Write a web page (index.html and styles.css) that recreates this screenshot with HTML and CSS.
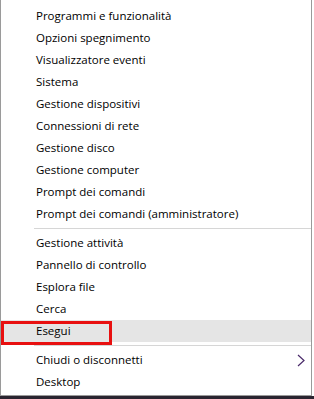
FILE: index.html
```html
<!DOCTYPE html>
<html>
<head>
    <title>Menu</title>
    <meta charset="utf-8">
    <link rel="stylesheet" href="styles.css">
</head>
<body>
    <div class="menu">
        <ul class="group">
            <li class="item">Programmi e funzionalità</li>
            <li class="item">Opzioni spegnimento</li>
            <li class="item">Visualizzatore eventi</li>
            <li class="item">Sistema</li>
            <li class="item">Gestione dispositivi</li>
            <li class="item">Connessioni di rete</li>
            <li class="item">Gestione disco</li>
            <li class="item">Gestione computer</li>
            <li class="item">Prompt dei comandi</li>
            <li class="item">Prompt dei comandi (amministratore)</li>
        </ul>
        <div class="sep"></div>
        <ul class="group">
            <li class="item">Gestione attività</li>
            <li class="item">Pannello di controllo</li>
            <li class="item">Esplora file</li>
            <li class="item">Cerca</li>
            <li class="item active">Esegui<span class="mark"></span></li>
        </ul>
        <div class="sep"></div>
        <ul class="group">
            <li class="item">Chiudi o disconnetti
                <svg class="chevron" viewBox="0 0 8 13" width="8" height="13">
                    <path d="M1 1 L7 6.5 L1 12" fill="none" stroke="#4a2a6a" stroke-width="1.2"/>
                </svg>
            </li>
            <li class="item">Desktop</li>
        </ul>
    </div>
    <div class="taskbar"></div>
</body>
</html>
```

FILE: styles.css
```css
html, body {
    margin: 0;
    padding: 0;
    background: #fff;
}

.menu {
    width: 312px;
    height: 396px;
    padding-top: 5px;
    border-left: 1px solid #9a9a9a;
    border-right: 1px solid #9a9a9a;
    border-bottom: 1px solid #9a9a9a;
    background: #fff;
    font-family: "Open Sans", "Noto Sans", sans-serif;
    font-size: 11.5px;
    color: #000;
    box-sizing: border-box;
}

.group {
    list-style: none;
    margin: 0;
    padding: 0;
}

.item {
    position: relative;
    height: 22px;
    line-height: 22px;
    padding-left: 35px;
}

.item.active {
    background: #e5e5e5;
}

.mark {
    position: absolute;
    left: 0;
    top: 1px;
    width: 111px;
    height: 24px;
    border: 3px solid #e81010;
    box-sizing: border-box;
}

.chevron {
    position: absolute;
    right: 6px;
    top: 5px;
}

.sep {
    height: 1px;
    margin: 3px 0 3px 33px;
    background: #d6d6d6;
}

.taskbar {
    height: 3px;
    background: #2a2430;
}
```
